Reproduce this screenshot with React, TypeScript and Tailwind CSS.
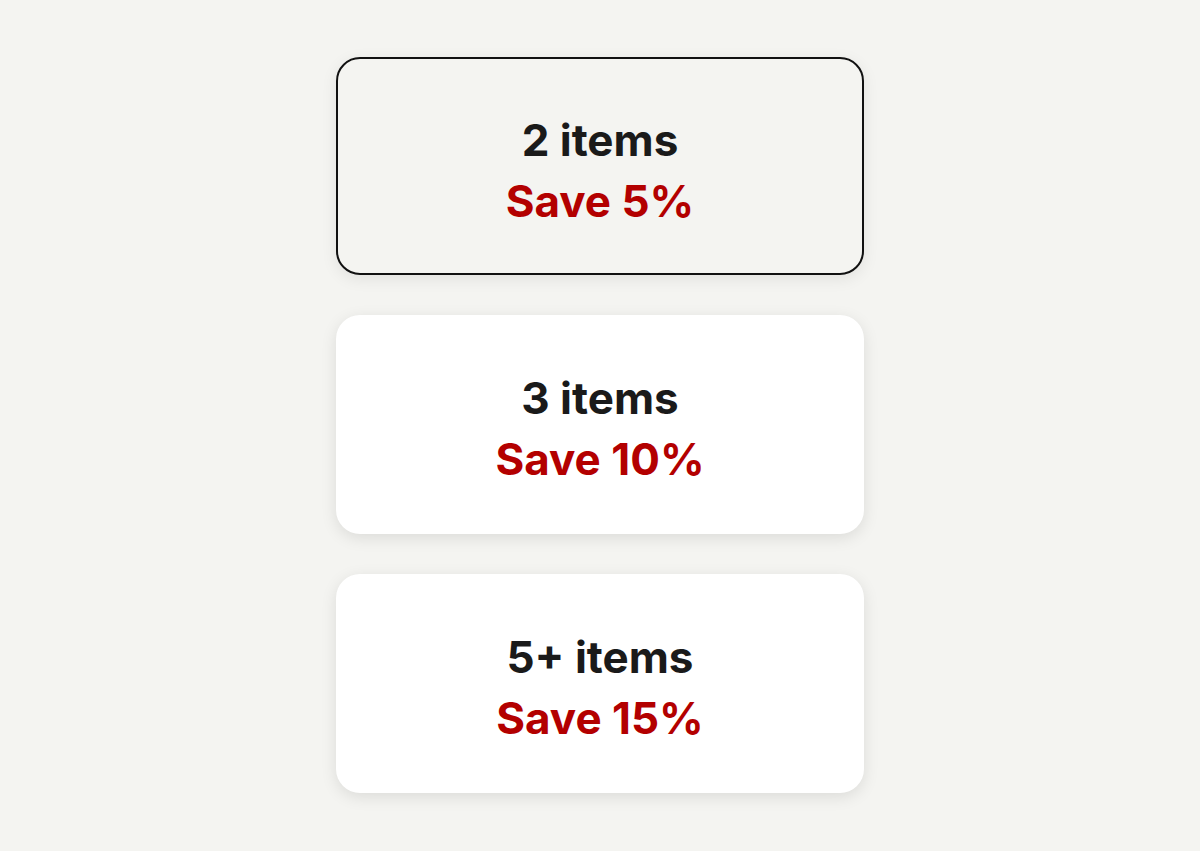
const tiers = [
  { qty: '2 items', save: 'Save 5%', selected: true },
  { qty: '3 items', save: 'Save 10%', selected: false },
  { qty: '5+ items', save: 'Save 15%', selected: false },
];

export default function App() {
  return (
    <div className="min-h-[851px] w-full bg-[#f4f4f1] flex flex-col items-center pt-[57px] gap-[40px] font-['Inter',sans-serif]">
      {tiers.map((tier) => (
        <div
          key={tier.qty}
          className={
            tier.selected
              ? 'w-[528px] h-[218px] rounded-[24px] border-[2.5px] border-[#111] bg-[#f4f4f1] shadow-[0_4px_16px_rgba(0,0,0,0.08)] flex flex-col items-center justify-center'
              : 'w-[528px] h-[219px] rounded-[24px] bg-white shadow-[0_4px_16px_rgba(0,0,0,0.1)] flex flex-col items-center justify-center'
          }
        >
          <div className="text-[44px] leading-[61px] font-bold tracking-[0px] text-[#1a1a1a] pt-[9px]">{tier.qty}</div>
          <div className="text-[44px] leading-[61px] font-bold tracking-[0px] text-[#b30000]">{tier.save}</div>
        </div>
      ))}
    </div>
  );
}
